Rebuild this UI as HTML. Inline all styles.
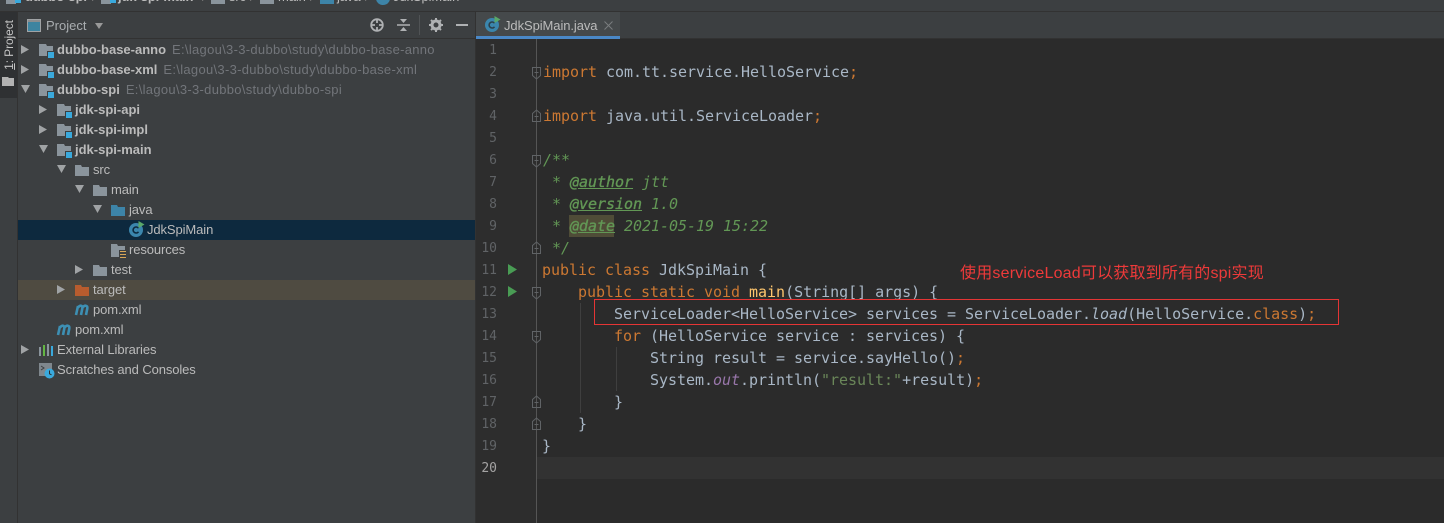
<!DOCTYPE html>
<html><head><meta charset="utf-8">
<style>
html,body{margin:0;padding:0;background:#3c3f41;width:1444px;height:523px;overflow:hidden}
#r{position:relative;width:1444px;height:523px;overflow:hidden;font-family:"Liberation Sans","Noto Sans CJK SC",sans-serif}
.a{position:absolute}
.t{position:absolute;font-size:13px;line-height:20px;color:#bbbbbb;white-space:pre;letter-spacing:-.1px}
.t b{letter-spacing:0}
.t i{font-style:normal;color:#72757a;margin-left:6px;letter-spacing:.3px}
.c{position:absolute;left:0;white-space:pre;font:15px/22px "DejaVu Sans Mono",monospace;letter-spacing:-.03px;color:#a9b7c6}
.n{position:absolute;left:476px;width:21px;margin-top:1px;text-align:right;font:13px/22px "DejaVu Sans Mono",monospace;color:#606366}
.k{color:#cc7832}.g,.g b{color:#629755;font-style:italic}
.g b{text-decoration:underline;font-weight:normal;-webkit-text-stroke:.35px #629755}
.s{color:#6a8759}.p{color:#9876aa;font-style:italic}.m{color:#ffc66d}
svg{position:absolute;overflow:visible}
</style></head><body><div id="r">
<svg width="0" height="0" style="left:0;top:0"><defs>
<path id="fo" d="M0 1h6l1 2h7v9H0z" fill="#8a949c"/>
<g id="mod"><path d="M0 0h7l1 2h6v10H0z" fill="#8a949c"/><rect x="8" y="7" width="7" height="7" fill="#3c3f41"/><rect x="9" y="8" width="6" height="6" fill="#3aa9dc"/></g>
<path id="ar" d="M0 0l8 4.500L0 9z" fill="#a0a3a5"/>
<path id="ad" d="M0 0h9L4.500 8z" fill="#a0a3a5"/>
<g id="foldd" fill="none" stroke="#606366"><path d="M-4.500 -4.500h8v8l-4 3.500-4-3.500z"/><path d="M-2.500 .5h4"/></g>
<g id="foldu" fill="none" stroke="#606366"><path d="M-4.500 5.500h8v-8l-4-3.500-4 3.500z"/><path d="M-2.500 .5h4"/></g>
<g id="mv" fill="none" stroke="#3d8fb3" stroke-width="2.600"><path d="M2 14L4 5M4 6.500C6 4 9 4 8.300 7.500L7 14M8.500 6.500C10.500 4 14 4 13.300 7.500L12 14"/></g>
</defs></svg>

<!-- top bar -->
<div class="a" style="left:0;top:0;width:1444px;height:11px;background:#3c3f41;overflow:hidden">
 <div class="a" style="left:6px;top:-4px;width:10px;height:8px;background:#8a949c"></div><div class="a" style="left:15px;top:-3px;width:6px;height:6px;background:#3aa9dc"></div>
 <div class="t" style="left:25px;top:-13px;font-weight:bold;color:#bbb">dubbo-spi</div><div class="t" style="left:92px;top:-13px;color:#777">/</div>
 <div class="a" style="left:101px;top:-4px;width:10px;height:8px;background:#8a949c"></div><div class="a" style="left:110px;top:-3px;width:6px;height:6px;background:#3aa9dc"></div>
 <div class="t" style="left:118px;top:-13px;font-weight:bold;color:#bbb">jdk-spi-main</div><div class="t" style="left:202px;top:-13px;color:#777">/</div>
 <div class="a" style="left:211px;top:-4px;width:14px;height:8px;background:#8a949c"></div><div class="t" style="left:229px;top:-13px">src</div><div class="t" style="left:250px;top:-13px;color:#777">/</div>
 <div class="a" style="left:260px;top:-4px;width:14px;height:8px;background:#8a949c"></div><div class="t" style="left:278px;top:-13px">main</div><div class="t" style="left:310px;top:-13px;color:#777">/</div>
 <div class="a" style="left:320px;top:-4px;width:14px;height:8px;background:#3d84a8"></div><div class="t" style="left:337px;top:-13px">java</div><div class="t" style="left:365px;top:-13px;color:#777">/</div>
 <div class="a" style="left:376px;top:-8px;width:14px;height:13px;border-radius:50%;background:#3d84a8"></div><div class="t" style="left:393px;top:-13px">JdkSpiMain</div>
</div>
<div class="a" style="left:0;top:11px;width:1444px;height:1px;background:#323232"></div>

<!-- side strip -->
<div class="a" style="left:0;top:12px;width:17px;height:511px;background:#3c3f41"></div>
<div class="a" style="left:0;top:12px;width:17px;height:86px;background:#2f3133"></div>
<div class="a" style="left:17px;top:12px;width:1px;height:511px;background:#323232"></div>
<div class="a" style="left:-21px;top:37px;width:60px;height:16px;line-height:16px;font-size:12px;letter-spacing:-.1px;color:#c4c4c4;transform:rotate(-90deg);text-align:center;white-space:pre"><span style="text-decoration:underline">1</span>: Project</div>
<svg style="left:2px;top:76px" width="12" height="10"><path d="M0 1h6l1 1h5v8H0z" fill="#b3b3b3"/></svg>

<!-- project header -->
<div class="a" style="left:18px;top:38px;width:457px;height:1px;background:#323232"></div>
<svg style="left:27px;top:19px" width="14" height="13"><rect x=".5" y=".5" width="13" height="12" fill="#3d84a0" stroke="#a0a3a5"/><rect x="1" y="1" width="12" height="2" fill="#8a8d8f"/></svg>
<div class="t" style="left:46px;top:16px;letter-spacing:0;color:#a9adb0">Project</div>
<svg style="left:95px;top:23px" width="8" height="6"><path d="M0 0h8L4 6z" fill="#999"/></svg>
<svg style="left:370px;top:18px" width="15" height="15" fill="none" stroke="#afb1b3" stroke-width="1.800"><circle cx="7" cy="7" r="5.800"/><path d="M7 1v4M7 9v4M1 7h4M9 7h4"/></svg>
<svg style="left:397px;top:18px" width="14" height="14"><path d="M0 7h13" stroke="#afb1b3" stroke-width="1.500"/><path d="M3 1h7L6.500 5zM3 13h7L6.500 9z" fill="#afb1b3"/></svg>
<div class="a" style="left:419px;top:15px;width:1px;height:20px;background:#505355"></div>
<svg style="left:429px;top:18px" width="14" height="14"><circle cx="7" cy="7" r="4" fill="none" stroke="#afb1b3" stroke-width="3"/><path d="M7 0v14M0 7h14M2 2l10 10M12 2L2 12" stroke="#afb1b3" stroke-width="2" stroke-dasharray="2.500 9 2.500 0"/></svg>
<div class="a" style="left:456px;top:24px;width:12px;height:2px;background:#afb1b3"></div>

<!-- tree rows -->
<div class="a" style="left:18px;top:220px;width:457px;height:20px;background:#0d293e"></div>
<div class="a" style="left:18px;top:280px;width:457px;height:20px;background:#4f4b41"></div>
<div class="a" style="left:475px;top:12px;width:1px;height:511px;background:#323232"></div>

<svg style="left:21px;top:45px" width="8" height="9"><use href="#ar"/></svg><svg style="left:39px;top:44px" width="15" height="14"><use href="#mod"/></svg>
<div class="t" style="left:57px;top:40px"><b>dubbo-base-anno</b><i>E:\lagou\3-3-dubbo\study\dubbo-base-anno</i></div>
<svg style="left:21px;top:65px" width="8" height="9"><use href="#ar"/></svg><svg style="left:39px;top:64px" width="15" height="14"><use href="#mod"/></svg>
<div class="t" style="left:57px;top:60px"><b>dubbo-base-xml</b><i>E:\lagou\3-3-dubbo\study\dubbo-base-xml</i></div>
<svg style="left:21px;top:85px" width="9" height="8"><use href="#ad"/></svg><svg style="left:39px;top:84px" width="15" height="14"><use href="#mod"/></svg>
<div class="t" style="left:57px;top:80px"><b>dubbo-spi</b><i>E:\lagou\3-3-dubbo\study\dubbo-spi</i></div>
<svg style="left:39px;top:105px" width="8" height="9"><use href="#ar"/></svg><svg style="left:57px;top:104px" width="15" height="14"><use href="#mod"/></svg>
<div class="t" style="left:75px;top:100px"><b>jdk-spi-api</b></div>
<svg style="left:39px;top:125px" width="8" height="9"><use href="#ar"/></svg><svg style="left:57px;top:124px" width="15" height="14"><use href="#mod"/></svg>
<div class="t" style="left:75px;top:120px"><b>jdk-spi-impl</b></div>
<svg style="left:39px;top:145px" width="9" height="8"><use href="#ad"/></svg><svg style="left:57px;top:144px" width="15" height="14"><use href="#mod"/></svg>
<div class="t" style="left:75px;top:140px"><b>jdk-spi-main</b></div>
<svg style="left:57px;top:165px" width="9" height="8"><use href="#ad"/></svg><svg style="left:75px;top:164px" width="14" height="12"><use href="#fo"/></svg>
<div class="t" style="left:93px;top:160px">src</div>
<svg style="left:75px;top:185px" width="9" height="8"><use href="#ad"/></svg><svg style="left:93px;top:184px" width="14" height="12"><use href="#fo"/></svg>
<div class="t" style="left:111px;top:180px">main</div>
<svg style="left:93px;top:205px" width="9" height="8"><use href="#ad"/></svg><svg style="left:111px;top:204px" width="14" height="12"><path d="M0 1h6l1 2h7v9H0z" fill="#3d84a8"/></svg>
<div class="t" style="left:129px;top:200px">java</div>
<svg style="left:129px;top:221px" width="16" height="16"><circle cx="7" cy="9" r="7" fill="#3b86ad"/><path d="M9.500 7.200A3 3 0 1 0 9.500 10.800" fill="none" stroke="#0d293e" stroke-width="1.600"/><path d="M9.500 0l6 3.500-6 3.500z" fill="#59a869"/></svg>
<div class="t" style="left:147px;top:220px;color:#bbb">JdkSpiMain</div>
<svg style="left:111px;top:244px" width="15" height="14"><path d="M0 0h6l1 2h7v4H8v7H0z" fill="#8a949c"/><path d="M9 7.500h6M9 10.500h6M9 13.500h6" stroke="#d8a657" stroke-width="1"/></svg>
<div class="t" style="left:129px;top:240px">resources</div>
<svg style="left:75px;top:265px" width="8" height="9"><use href="#ar"/></svg><svg style="left:93px;top:264px" width="14" height="12"><use href="#fo"/></svg>
<div class="t" style="left:111px;top:260px">test</div>
<svg style="left:57px;top:285px" width="8" height="9"><use href="#ar"/></svg><svg style="left:75px;top:284px" width="14" height="12"><path d="M0 1h6l1 2h7v9H0z" fill="#b85c2e"/></svg>
<div class="t" style="left:93px;top:280px">target</div>
<svg style="left:74px;top:301px" width="16" height="16"><use href="#mv"/></svg>
<div class="t" style="left:93px;top:300px">pom.xml</div>
<svg style="left:56px;top:321px" width="16" height="16"><use href="#mv"/></svg>
<div class="t" style="left:75px;top:320px">pom.xml</div>
<svg style="left:21px;top:345px" width="8" height="9"><use href="#ar"/></svg>
<svg style="left:39px;top:344px" width="14" height="12"><rect x="0" y="3" width="2" height="9" fill="#8a949c"/><rect x="4" y="1" width="2" height="11" fill="#62b543"/><rect x="8" y="0" width="2" height="12" fill="#8a949c"/><rect x="12" y="2" width="2" height="10" fill="#3aa9dc"/></svg>
<div class="t" style="left:57px;top:340px">External Libraries</div>
<svg style="left:39px;top:363px" width="16" height="16"><path d="M0 0h13v8H8v5H0z" fill="#7f878d"/><path d="M2 3l3 2-3 2" fill="none" stroke="#3c3f41"/><circle cx="10.500" cy="10.500" r="5" fill="#3aa9dc"/><path d="M10.500 7.500v3.300l2 1" fill="none" stroke="#2b2b2b"/></svg>
<div class="t" style="left:57px;top:360px">Scratches and Consoles</div>

<!-- editor -->
<div class="a" style="left:476px;top:12px;width:968px;height:26px;background:#3c3f41"></div>
<div class="a" style="left:476px;top:12px;width:144px;height:24px;background:#45494b"></div>
<div class="a" style="left:476px;top:36px;width:144px;height:3px;background:#4a88c7"></div>
<div class="a" style="left:620px;top:38px;width:824px;height:1px;background:#323232"></div>
<svg style="left:485px;top:16px" width="16" height="16"><circle cx="7" cy="9" r="7" fill="#3b86ad"/><path d="M9.500 7.200A3 3 0 1 0 9.500 10.800" fill="none" stroke="#2b3f4a" stroke-width="1.600"/><path d="M9.500 0l6 3.500-6 3.500z" fill="#59a869"/></svg>
<div class="t" style="left:504px;top:16px;color:#bbb;letter-spacing:-.08px">JdkSpiMain.java</div>
<svg style="left:604px;top:21px" width="9" height="9"><path d="M.5.5l8 8M8.500.5l-8 8" stroke="#7a7d7f"/></svg>

<div class="a" style="left:476px;top:39px;width:968px;height:484px;background:#2b2b2b"></div>
<div class="a" style="left:476px;top:39px;width:60px;height:484px;background:#2d2d2d"></div>
<div class="a" style="left:537px;top:457px;width:907px;height:22px;background:#323232"></div>
<div class="a" style="left:536px;top:39px;width:1px;height:484px;background:#555555"></div>
<div class="a" style="left:580px;top:303px;width:1px;height:110px;background:#3f3f3f"></div>
<div class="a" style="left:616px;top:347px;width:1px;height:44px;background:#3f3f3f"></div>

<div class="n" style="top:39px">1</div><div class="n" style="top:61px">2</div><div class="n" style="top:83px">3</div><div class="n" style="top:105px">4</div><div class="n" style="top:127px">5</div><div class="n" style="top:149px">6</div><div class="n" style="top:171px">7</div><div class="n" style="top:193px">8</div><div class="n" style="top:215px">9</div><div class="n" style="top:237px">10</div><div class="n" style="top:259px">11</div><div class="n" style="top:281px">12</div><div class="n" style="top:303px">13</div><div class="n" style="top:325px">14</div><div class="n" style="top:347px">15</div><div class="n" style="top:369px">16</div><div class="n" style="top:391px">17</div><div class="n" style="top:413px">18</div><div class="n" style="top:435px">19</div><div class="n" style="top:457px;color:#a4a3a3">20</div>

<svg style="left:508px;top:264px" width="10" height="11"><path d="M0 0l9 5.500L0 11z" fill="#499c54"/></svg>
<svg style="left:508px;top:286px" width="10" height="11"><path d="M0 0l9 5.500L0 11z" fill="#499c54"/></svg>

<svg style="left:537px;top:72px" width="1" height="1"><use href="#foldd"/></svg>
<svg style="left:537px;top:116px" width="1" height="1"><use href="#foldu"/></svg>
<svg style="left:537px;top:160px" width="1" height="1"><use href="#foldd"/></svg>
<svg style="left:537px;top:248px" width="1" height="1"><use href="#foldu"/></svg>
<svg style="left:537px;top:292px" width="1" height="1"><use href="#foldd"/></svg>
<svg style="left:537px;top:336px" width="1" height="1"><use href="#foldd"/></svg>
<svg style="left:537px;top:402px" width="1" height="1"><use href="#foldu"/></svg>
<svg style="left:537px;top:424px" width="1" height="1"><use href="#foldu"/></svg>

<div class="a" style="left:569px;top:215px;width:45px;height:22px;background:#4f4c37"></div>

<div class="c" style="left:543px;top:61px"><span class="k">import</span> com.tt.service.HelloService<span class="k">;</span></div>
<div class="c" style="left:543px;top:105px"><span class="k">import</span> java.util.ServiceLoader<span class="k">;</span></div>
<div class="c" style="left:543px;top:149px"><span class="g">/**</span></div>
<div class="c" style="left:543px;top:171px"><span class="g"> * <b>@author</b> jtt</span></div>
<div class="c" style="left:543px;top:193px"><span class="g"> * <b>@version</b> 1.0</span></div>
<div class="c" style="left:543px;top:215px"><span class="g"> * <b>@date</b> 2021-05-19 15:22</span></div>
<div class="c" style="left:543px;top:237px"><span class="g"> */</span></div>
<div class="c" style="left:542px;top:259px"><span class="k">public class</span> JdkSpiMain {</div>
<div class="c" style="left:542px;top:281px">    <span class="k">public static void</span> <span class="m">main</span>(String[] args) {</div>
<div class="c" style="left:542px;top:303px">        ServiceLoader&lt;HelloService&gt; services = ServiceLoader.<span style="font-style:italic">load</span>(HelloService.<span class="k">class</span>)<span class="k">;</span></div>
<div class="c" style="left:542px;top:325px">        <span class="k">for</span> (HelloService service : services) {</div>
<div class="c" style="left:542px;top:347px">            String result = service.sayHello()<span class="k">;</span></div>
<div class="c" style="left:542px;top:369px">            System.<span class="p">out</span>.println(<span class="s">"result:"</span>+result)<span class="k">;</span></div>
<div class="c" style="left:542px;top:391px">        }</div>
<div class="c" style="left:542px;top:413px">    }</div>
<div class="c" style="left:542px;top:435px">}</div>

<div class="a" style="left:594px;top:299px;width:743px;height:24px;border:1px solid #e53535"></div>
<div class="a" style="left:960px;top:263px;font-size:16px;letter-spacing:.2px;line-height:22px;color:#ee3a3a;white-space:pre;font-family:'Liberation Sans','Noto Sans CJK SC',sans-serif">使用serviceLoad可以获取到所有的spi实现</div>
</div></body></html>
